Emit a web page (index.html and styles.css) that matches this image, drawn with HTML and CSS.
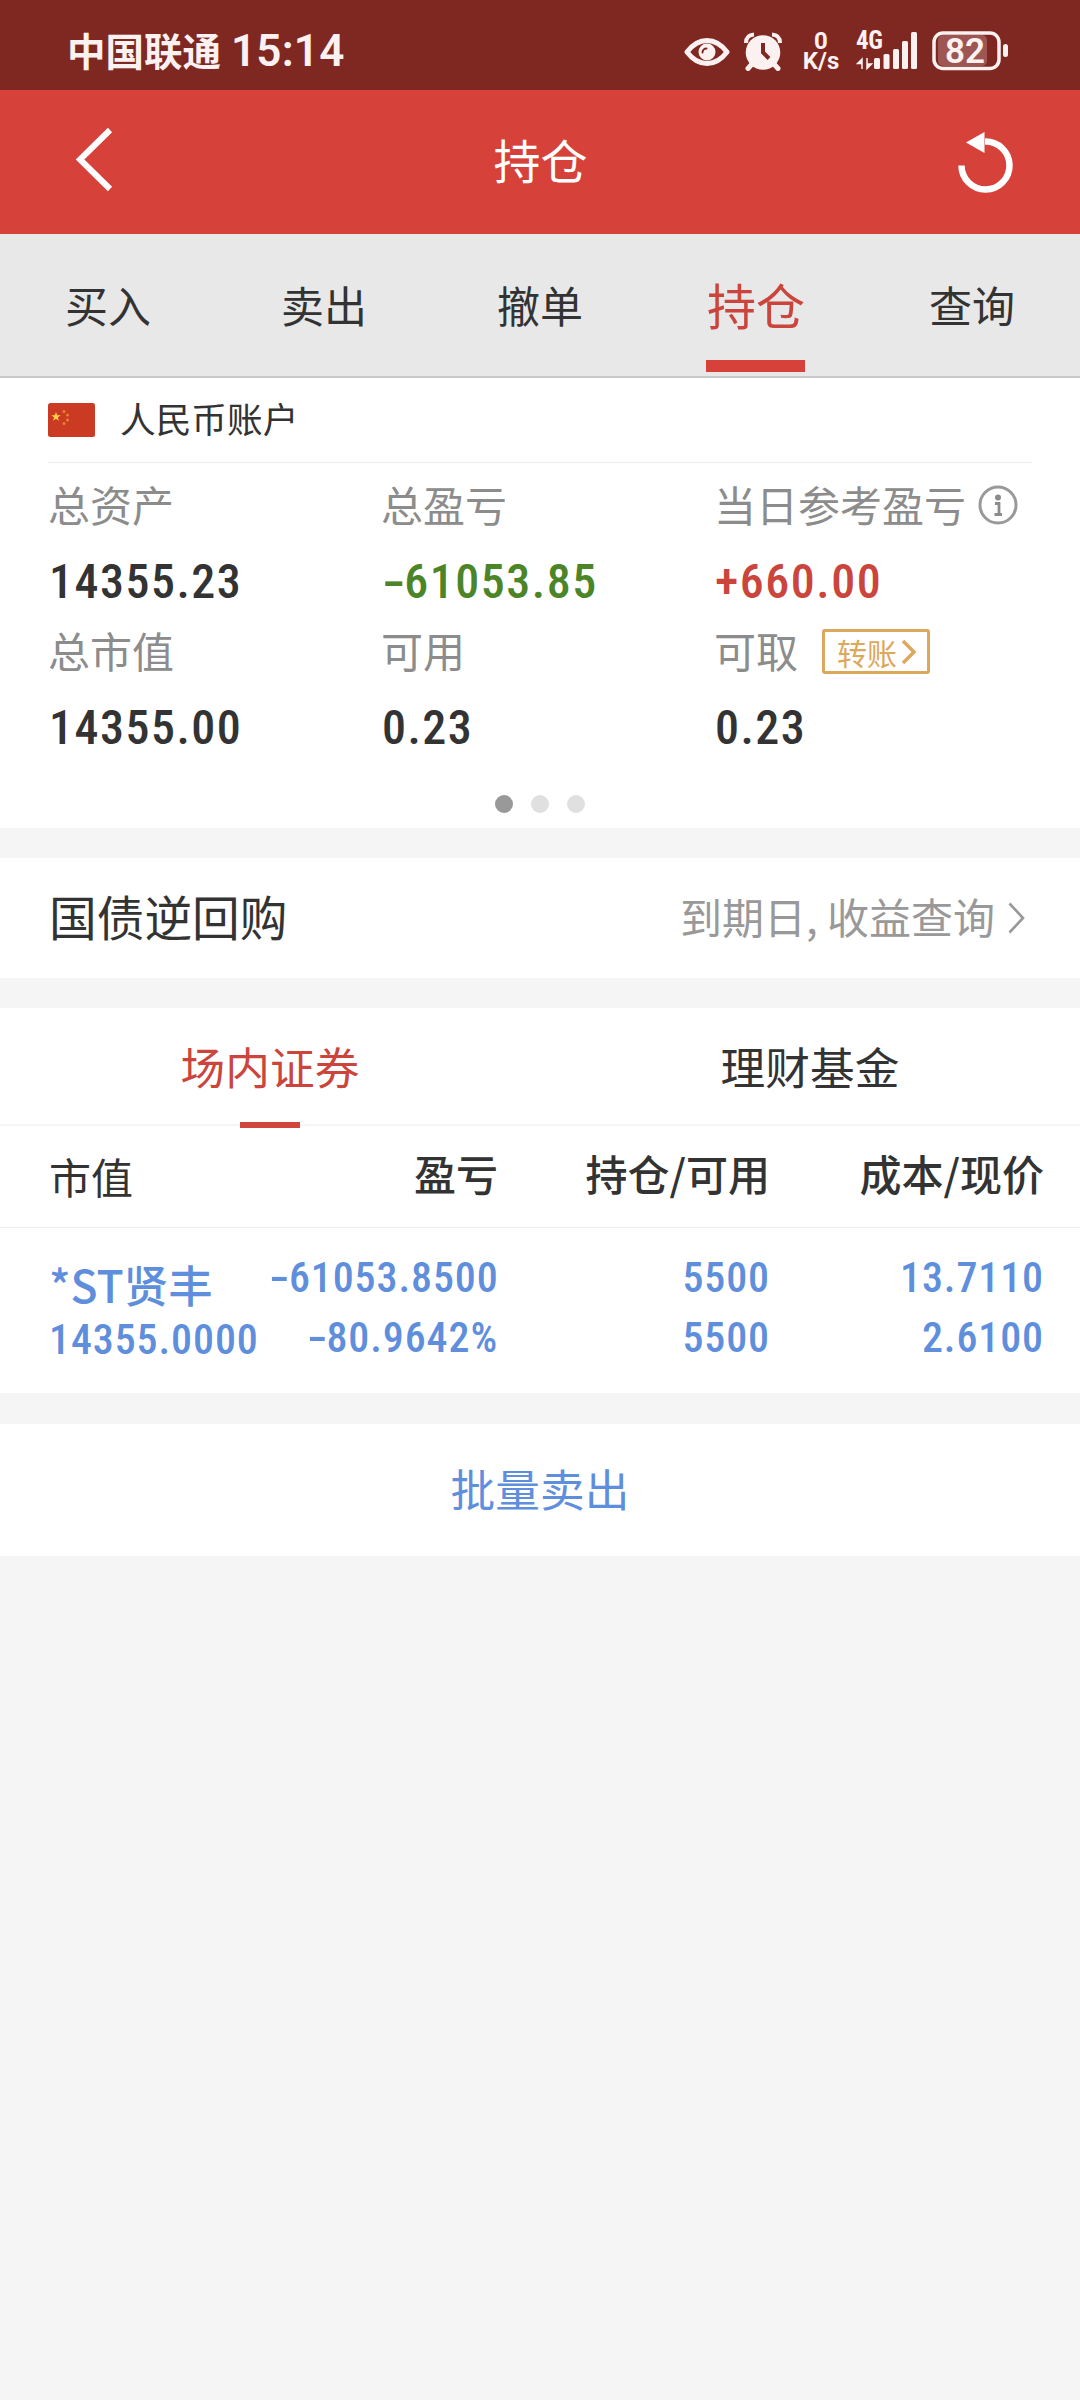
FILE: index.html
```html
<!DOCTYPE html>
<html lang="zh-CN">
<head>
  <meta charset="UTF-8">
  <meta name="viewport" content="width=device-width, initial-scale=1.0">
  <title>持仓</title>
  <link rel="stylesheet" href="styles.css">
</head>
<body>
  <!-- 状态栏 -->
  <div class="status-bar">
    <div class="carrier">中国联通</div>
    <div class="time">15:14</div>
    <div class="status-icons">
      <svg class="icon-eye" width="46" height="40" viewBox="0 0 46 40">
        <path d="M3 21C9 13 15 9.500 23 9.500S37 13 43 21C37 29 31 32.500 23 32.500S9 29 3 21Z" fill="none" stroke="#fbf1f0" stroke-width="5" stroke-linejoin="round"/>
        <circle cx="23" cy="21" r="8.500" fill="#fbf1f0"/>
        <path d="M18.500 21.500a4 4 0 0 1 4-4" fill="none" stroke="#7f2721" stroke-width="2" stroke-linecap="round"/>
      </svg>
      <svg class="icon-alarm" width="38" height="40" viewBox="0 0 38 40">
        <path d="M2 12Q2 4 10 3.500M36 12Q36 4 28 3.500" fill="none" stroke="#fbf1f0" stroke-width="4"/>
        <circle cx="19" cy="21.500" r="17.300" fill="#fbf1f0"/>
        <path d="M8 33L4 37.500M30 33L34 37.500" stroke="#fbf1f0" stroke-width="5" stroke-linecap="round"/>
        <path d="M19 12V21.500L25 27.500" fill="none" stroke="#7f2721" stroke-width="4"/>
      </svg>
      <div class="speed"><span>0</span><span>K/s</span></div>
      <div class="signal">
        <span class="net-type">4G</span>
        <svg width="64" height="40" viewBox="0 0 64 40">
          <path d="M6 38V28L1.500 32.500H6M11 27V37.500L15.500 33H11" fill="#fbf1f0" stroke="#fbf1f0" stroke-width="1.500"/>
          <g fill="#fbf1f0">
            <rect x="18" y="27" width="6" height="11" rx="1.500"/>
            <rect x="27.500" y="23" width="6" height="15" rx="1.500"/>
            <rect x="37" y="18" width="6" height="20" rx="1.500"/>
            <rect x="46" y="10" width="6" height="28" rx="1.500"/>
            <rect x="55" y="1" width="6" height="37" rx="1.500"/>
          </g>
        </svg>
      </div>
      <svg class="icon-battery" width="77" height="40" viewBox="0 0 77 40">
        <rect x="6" y="4" width="49" height="31" rx="5" fill="#9d5652"/>
        <rect x="2" y="2" width="65" height="35.500" rx="9" fill="none" stroke="#fbf1f0" stroke-width="3.500"/>
        <rect x="71" y="13" width="5" height="13" rx="2.500" fill="#fbf1f0"/>
        <text x="33" y="32" class="battery-num" text-anchor="middle">82</text>
      </svg>
    </div>
  </div>

  <!-- 标题栏 -->
  <header class="header">
    <svg width="40" height="70" viewBox="0 0 40 70">
      <path d="M35 3L5 32.500L35 62" fill="none" stroke="#fff" stroke-width="6"/>
    </svg>
    <h1>持仓</h1>
    <svg width="58" height="64" viewBox="0 0 58 64">
      <path d="M5.500 35.500A24 24 0 1 0 29 11.500" fill="none" stroke="#fff" stroke-width="6.500"/>
      <path d="M10 12.500L28.500 2V23Z" fill="#fff"/>
    </svg>
  </header>

  <nav class="tabs">
    <a>买入</a>
    <a>卖出</a>
    <a>撤单</a>
    <a class="active">持仓</a>
    <a>查询</a>
  </nav>

  <!-- 账户资产 -->
  <section class="account">
    <div class="account-title">
      <svg width="47" height="34" viewBox="0 0 47 34">
        <rect width="47" height="34" rx="2.500" fill="#cb3a23"/>
        <path d="M8 9l1.200 3.200 3.400.1-2.700 2.100 1 3.300L8 15.800l-2.900 1.900 1-3.300-2.700-2.100 3.400-.1z" fill="#fbd04b"/>
        <g fill="#e8822f">
          <circle cx="16" cy="8.500" r="1.500"/>
          <circle cx="19.500" cy="12" r="1.500"/>
          <circle cx="19.500" cy="17" r="1.500"/>
          <circle cx="16" cy="20.500" r="1.500"/>
        </g>
      </svg>
      <span>人民币账户</span>
    </div>
    <div class="assets">
      <div class="asset">
        <div class="label">总资产</div>
        <div class="value">14355.23</div>
      </div>
      <div class="asset">
        <div class="label">总盈亏</div>
        <div class="value green"><i>-</i>61053.85</div>
      </div>
      <div class="asset">
        <div class="label">当日参考盈亏
          <svg class="info" width="40" height="40" viewBox="0 0 40 40">
            <circle cx="20" cy="20" r="18" fill="none" stroke="#999" stroke-width="3"/>
            <circle cx="20" cy="12.500" r="3" fill="#8c8c8c"/>
            <path d="M17 18.500H21V29.500M16.500 29.500H24" fill="none" stroke="#8c8c8c" stroke-width="2.800"/>
          </svg>
        </div>
        <div class="value red">+660.00</div>
      </div>
      <div class="asset">
        <div class="label">总市值</div>
        <div class="value">14355.00</div>
      </div>
      <div class="asset">
        <div class="label">可用</div>
        <div class="value">0.23</div>
      </div>
      <div class="asset">
        <div class="label">可取
          <a class="transfer">转账<svg width="16" height="26" viewBox="0 0 16 26"><path d="M2 2L13 13L2 24" fill="none" stroke="#dca85c" stroke-width="3.500"/></svg></a>
        </div>
        <div class="value">0.23</div>
      </div>
    </div>
    <div class="dots">
      <span class="on"></span>
      <span></span>
      <span></span>
    </div>
  </section>

  <section class="repo">
    <span class="repo-name">国债逆回购</span>
    <span class="repo-link">到期日, 收益查询</span>
    <svg width="18" height="32" viewBox="0 0 18 32">
      <path d="M1.500 1.500L15 16L1.500 30.500" fill="none" stroke="#999" stroke-width="2.600"/>
    </svg>
  </section>

  <!-- 持仓列表 -->
  <section class="holdings">
    <div class="sub-tabs">
      <a class="active">场内证券</a>
      <a>理财基金</a>
    </div>
    <div class="row head">
      <span>市值</span>
      <span>盈亏</span>
      <span>持仓/可用</span>
      <span>成本/现价</span>
    </div>
    <div class="row stock">
      <div class="name"><b>*ST贤丰</b><span>14355.0000</span></div>
      <div><span><i>-</i>61053.8500</span><span><i>-</i>80.9642%</span></div>
      <div><span>5500</span><span>5500</span></div>
      <div><span>13.7110</span><span>2.6100</span></div>
    </div>
  </section>

  <a class="batch-sell">批量卖出</a>
</body>
</html>
```
FILE: styles.css
```css
* {
  margin: 0;
  padding: 0;
  box-sizing: border-box;
}
body {
  width: 1080px;
  min-height: 2400px;
  font-family: "Noto Sans CJK SC", sans-serif;
  background-color: #f5f5f5;
  color: #333;
}
svg {
  display: block;
  flex-shrink: 0;
}

/* 状态栏 */
.status-bar {
  display: flex;
  height: 90px;
  padding-left: 67px;
  background-color: #7f2721;
  color: #fbf1f0;
}
.carrier {
  width: 164px;
  font-size: 38.5px;
  font-weight: 700;
  line-height: 98px;
}
.time {
  font-family: Roboto, sans-serif;
  font-size: 44px;
  font-weight: 600;
  font-stretch: 88%;
  line-height: 103px;
  letter-spacing: 0.2px;
}
.status-icons {
  display: flex;
  margin-left: auto;
  padding: 31px 71px 0 0;
}
.icon-alarm {
  margin-left: 14px;
}
.speed {
  display: flex;
  flex-direction: column;
  width: 42px;
  margin-left: 18px;
  font-family: Roboto, sans-serif;
  font-size: 24px;
  font-weight: 700;
  line-height: 20px;
  text-align: center;
}
.signal {
  position: relative;
  margin-left: 14px;
}
.net-type {
  position: absolute;
  top: -5px;
  left: 0;
  font-family: Roboto, sans-serif;
  font-size: 25px;
  font-weight: 700;
  font-stretch: 80%;
  line-height: 30px;
  letter-spacing: -0.5px;
}
.icon-battery {
  margin-left: 12px;
}
.battery-num {
  font-family: Roboto, sans-serif;
  font-size: 35px;
  font-weight: 600;
  font-stretch: 92%;
  fill: #fbf1f0;
}

/* 标题栏 */
.header {
  display: flex;
  align-items: center;
  justify-content: space-between;
  height: 144px;
  padding: 0 66px 0 75px;
  background-color: #d6413a;
  color: #fff;
}
.header h1 {
  margin-left: 10px;
  font-size: 47px;
  font-weight: 400;
  line-height: 138px;
  height: 144px;
}

.tabs {
  display: flex;
  height: 144px;
  background-color: #e8e8e8;
  border-bottom: 2px solid #c9c9c9;
}
.tabs a {
  position: relative;
  width: 216px;
  font-size: 43px;
  line-height: 140px;
  text-align: center;
}
.tabs .active {
  color: #cb453c;
  font-size: 49px;
}
.tabs .active::after {
  content: "";
  position: absolute;
  left: 58px;
  bottom: 4px;
  width: 99px;
  height: 12px;
  background-color: #d6413a;
}

/* 账户资产 */
.account {
  height: 450px;
  padding: 0 48px;
  background-color: #fff;
}
.account-title {
  display: flex;
  align-items: center;
  height: 85px;
  border-bottom: 1px solid #ececec;
  font-size: 35.7px;
}
.account-title span {
  height: 56px;
  margin-left: 25px;
  line-height: 52px;
}
.assets {
  display: grid;
  grid-template-columns: 333px 333px 1fr;
  grid-auto-rows: 146px;
}
.label {
  display: flex;
  align-items: center;
  height: 84px;
  font-size: 42px;
  line-height: 80px;
  padding-bottom: 2px;
  color: #8c8c8c;
}
.value {
  height: 62px;
  padding-left: 1px;
  font-family: Roboto, sans-serif;
  font-size: 48px;
  font-weight: 550;
  font-stretch: 85%;
  line-height: 70px;
  letter-spacing: 1.5px;
  color: #333;
}
/* 加宽的负号 */
.value i,
.stock i {
  display: inline-block;
  margin-right: 6px;
  font-style: normal;
  transform: scaleX(1.6);
  transform-origin: left;
}
.green {
  color: #4b8528;
}
.red {
  color: #cb453c;
}
.info {
  margin-top: 2px;
  margin-left: 12px;
}
.transfer {
  display: flex;
  align-items: center;
  justify-content: space-between;
  width: 108px;
  height: 45px;
  margin-top: 3px;
  margin-left: 24px;
  padding: 0 10px 0 12px;
  border: 3px solid #dca85c;
  border-radius: 3px;
  font-size: 30px;
  line-height: 38px;
  color: #dca85c;
}
.dots {
  display: flex;
  justify-content: center;
  gap: 18px;
  margin-top: 40px;
}
.dots span {
  width: 18px;
  height: 18px;
  border-radius: 50%;
  background-color: #e0e0e0;
}
.dots .on {
  background-color: #999;
}

.repo {
  display: flex;
  align-items: center;
  height: 120px;
  margin-top: 30px;
  padding: 0 54px 0 49px;
  background-color: #fff;
}
.repo-name {
  height: 120px;
  font-size: 47.7px;
  line-height: 116px;
}
.repo-link {
  height: 120px;
  margin-left: auto;
  font-size: 42px;
  line-height: 116px;
  color: #999;
}
.repo svg {
  margin-left: 13px;
}

/* 持仓列表 */
.holdings {
  height: 385px;
  margin-top: 30px;
  background-color: #fff;
}
.sub-tabs {
  display: flex;
  height: 118px;
  border-bottom: 2px solid #f5f5f5;
}
.sub-tabs a {
  position: relative;
  width: 50%;
  font-size: 44.7px;
  line-height: 115px;
  text-align: center;
}
.sub-tabs .active {
  color: #cb453c;
}
.sub-tabs .active::after {
  content: "";
  position: absolute;
  left: 240px;
  bottom: -4px;
  width: 60px;
  height: 6px;
  background-color: #d0453c;
}
.row {
  display: grid;
  grid-template-columns: 220px 229px 272px 274px;
  padding-left: 49px;
  text-align: right;
}
.head {
  height: 102px;
  border-bottom: 1px solid #ececec;
  font-size: 42px;
  font-weight: 500;
  line-height: 94px;
}
.head span:first-child {
  font-weight: 400;
  line-height: 100px;
  text-align: left;
}
.stock {
  padding-top: 20px;
  font-family: Roboto, "Noto Sans CJK SC", sans-serif;
  font-size: 42px;
  font-stretch: 85%;
  letter-spacing: 0.9px;
  color: #5f8fdc;
}
.stock span,
.stock b {
  display: block;
  font-weight: 500;
  line-height: 60px;
  white-space: nowrap;
}
.stock .name {
  padding-top: 10px;
  text-align: left;
}
.stock b {
  font-family: "Noto Sans CJK SC", sans-serif;
  font-size: 44.5px;
  line-height: 52px;
  letter-spacing: 0;
}

.batch-sell {
  display: block;
  height: 132px;
  margin-top: 31px;
  background-color: #fff;
  font-size: 44.7px;
  line-height: 128px;
  text-align: center;
  color: #5f8fdc;
}
```
